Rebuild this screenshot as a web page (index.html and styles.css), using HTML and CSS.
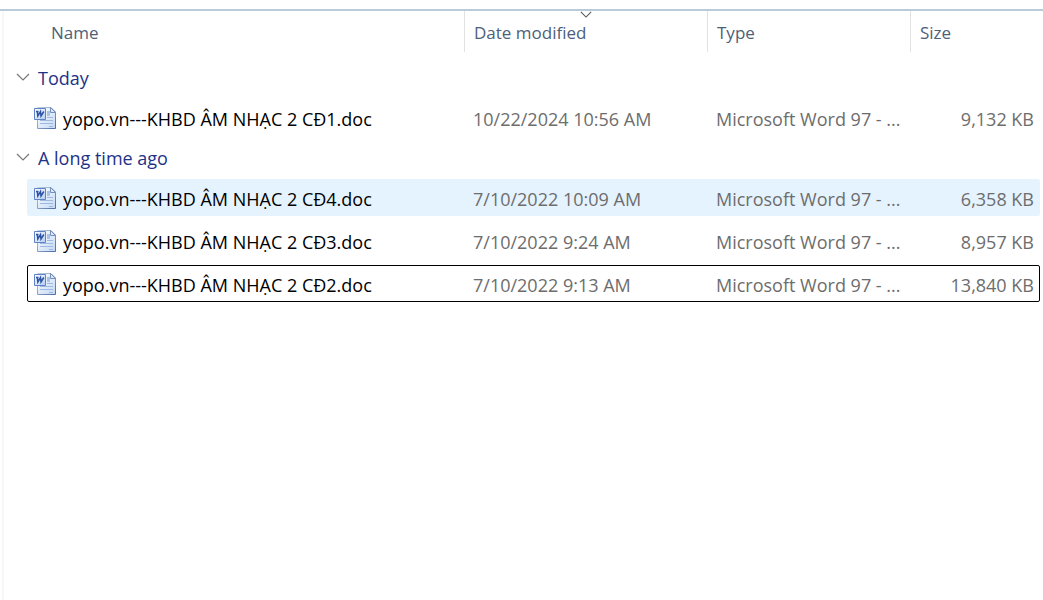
FILE: index.html
```
<!DOCTYPE html>
<html lang="en">
<head>
<meta charset="utf-8">
<meta name="viewport" content="width=device-width, initial-scale=1">
<title>Files</title>
<link rel="stylesheet" href="styles.css">
</head>
<body>
<svg class="sprite" aria-hidden="true">
  <defs>
    <linearGradient id="page" x1="0" y1="0" x2="1" y2="1"><stop offset="0" stop-color="#ffffff"/><stop offset="1" stop-color="#c3d8f4"/></linearGradient>
    <linearGradient id="edge" x1="0" y1="0" x2="1" y2="1"><stop offset="0" stop-color="#c3d2e6"/><stop offset="1" stop-color="#4c6ca4"/></linearGradient>
    <linearGradient id="badge" x1="0" y1="0" x2="1" y2="1"><stop offset="0" stop-color="#ffffff"/><stop offset="1" stop-color="#b4cdf2"/></linearGradient>
  </defs>
  <symbol id="doc" viewBox="0 0 24 24">
    <path d="M4.5 1.5H18L22.5 6V22.5H4.5Z" fill="url(#page)" stroke="url(#edge)"/>
    <path d="M17.5 1.5V6.500H22.5Z" fill="#dce8f8" stroke="#7590ba"/>
    <path d="M14 5h3v5h-3z" fill="#a9c3e8"/>
    <path d="M14 11.5h6M7 14.5h13M7 17.5h13M16 20.5h4" stroke="#9db9e2" fill="none"/>
    <path d="M1.5 2.5H12.5V13.5H1.5Z" fill="url(#badge)" stroke="#5f83c6"/>
    <path d="M3 5.5H5.500M4.300 5.500L4.800 10L7.500 5.500L8 10L10.800 5.500" fill="none" stroke="#2c53a6" stroke-width="1.500"/>
  </symbol>
  <symbol id="chevron" viewBox="0 0 14 8"><path d="M1 1L7 7L13 1" fill="none" stroke="currentColor" stroke-width="1.200"/></symbol>
</svg>
<main class="pane">
  <table class="files">
    <thead>
      <tr class="row head">
        <th><button class="sort name-head" type="button">Name</button></th>
        <th><button class="sort" type="button">Date modified<svg class="sort-mark" aria-hidden="true"><use href="#chevron"/></svg></button></th>
        <th><button class="sort" type="button">Type</button></th>
        <th><button class="sort" type="button">Size</button></th>
      </tr>
    </thead>
    <tbody>
      <tr class="group"><th><button class="toggle" type="button" aria-expanded="true"><svg class="chevron" aria-hidden="true"><use href="#chevron"/></svg>Today</button></th></tr>
      <tr class="row file"><td class="name"><svg class="doc" aria-hidden="true"><use href="#doc"/></svg>yopo.vn---KHBD ÂM NHẠC 2 CĐ1.doc</td><td>10/22/2024 10:56 AM</td><td>Microsoft Word 97 - ...</td><td class="size">9,132 KB</td></tr>
    </tbody>
    <tbody>
      <tr class="group"><th><button class="toggle" type="button" aria-expanded="true"><svg class="chevron" aria-hidden="true"><use href="#chevron"/></svg>A long time ago</button></th></tr>
      <tr class="row file hovered"><td class="name"><svg class="doc" aria-hidden="true"><use href="#doc"/></svg>yopo.vn---KHBD ÂM NHẠC 2 CĐ4.doc</td><td>7/10/2022 10:09 AM</td><td>Microsoft Word 97 - ...</td><td class="size">6,358 KB</td></tr>
      <tr class="row file"><td class="name"><svg class="doc" aria-hidden="true"><use href="#doc"/></svg>yopo.vn---KHBD ÂM NHẠC 2 CĐ3.doc</td><td>7/10/2022 9:24 AM</td><td>Microsoft Word 97 - ...</td><td class="size">8,957 KB</td></tr>
      <tr class="row file focused"><td class="name"><svg class="doc" aria-hidden="true"><use href="#doc"/></svg>yopo.vn---KHBD ÂM NHẠC 2 CĐ2.doc</td><td>7/10/2022 9:13 AM</td><td>Microsoft Word 97 - ...</td><td class="size">13,840 KB</td></tr>
    </tbody>
  </table>
</main>
</body>
</html>
```
FILE: styles.css
```
* { box-sizing: border-box; }

body {
  margin: 0;
  padding-top: 9px;
  min-height: 100vh;
  display: flex;
  flex-direction: column;
  background: #fff;
  color: #6d6d6d;
  font: 18px/24px "Open Sans", "Noto Sans", sans-serif;
}

.sprite { position: absolute; width: 0; height: 0; }

.pane {
  flex: 1;
  border-top: 2px solid #bacadb;
  padding-left: 2px;
}

.files {
  display: block;
  border-left: 2px solid #f7f7f7;
  min-height: calc(100vh - 11px);
  padding: 0 3px 0 12px;
}

thead, tbody { display: block; }

th, td { padding: 0; font-weight: 400; text-align: left; white-space: nowrap; }

button {
  border: 0;
  background: none;
  color: inherit;
  font: inherit;
  text-align: left;
}

.row {
  display: grid;
  grid-template-columns: minmax(0, 1fr) 243px 203px 130px;
  margin-left: 11px;
}

.head { height: 41px; margin-bottom: 4px; color: #4c607a; font-size: 17px; }
.head th + th { border-left: 1px solid #e2e2e2; }

.sort {
  position: relative;
  width: 100%;
  height: 100%;
  padding: 2px 9px 0;
}
.name-head { padding-left: 24px; }

.sort-mark {
  position: absolute;
  top: 0;
  left: 50%;
  width: 12px;
  height: 7px;
  margin-left: -6px;
  color: #555;
}

.group { display: block; color: #1e3287; }
.group th { display: block; }

.toggle {
  display: flex;
  align-items: center;
  gap: 8px;
  height: 43px;
  padding: 0;
}
.chevron { width: 14px; height: 8px; margin-bottom: 2px; color: #777; }

.file {
  height: 37px;
  align-items: center;
  border: 1px solid transparent;
  border-radius: 2px;
}
.file + .file { margin-top: 6px; }
.file td { padding: 3px 0 0 10px; }
.file .name {
  display: flex;
  align-items: center;
  gap: 6px;
  padding-left: 5px;
  color: #000;
}
.file .size { padding-right: 5px; text-align: right; }
.doc { width: 24px; height: 24px; margin-bottom: 2px; }

.hovered { background: #e5f3ff; }
.focused { border-color: #000; }
```
